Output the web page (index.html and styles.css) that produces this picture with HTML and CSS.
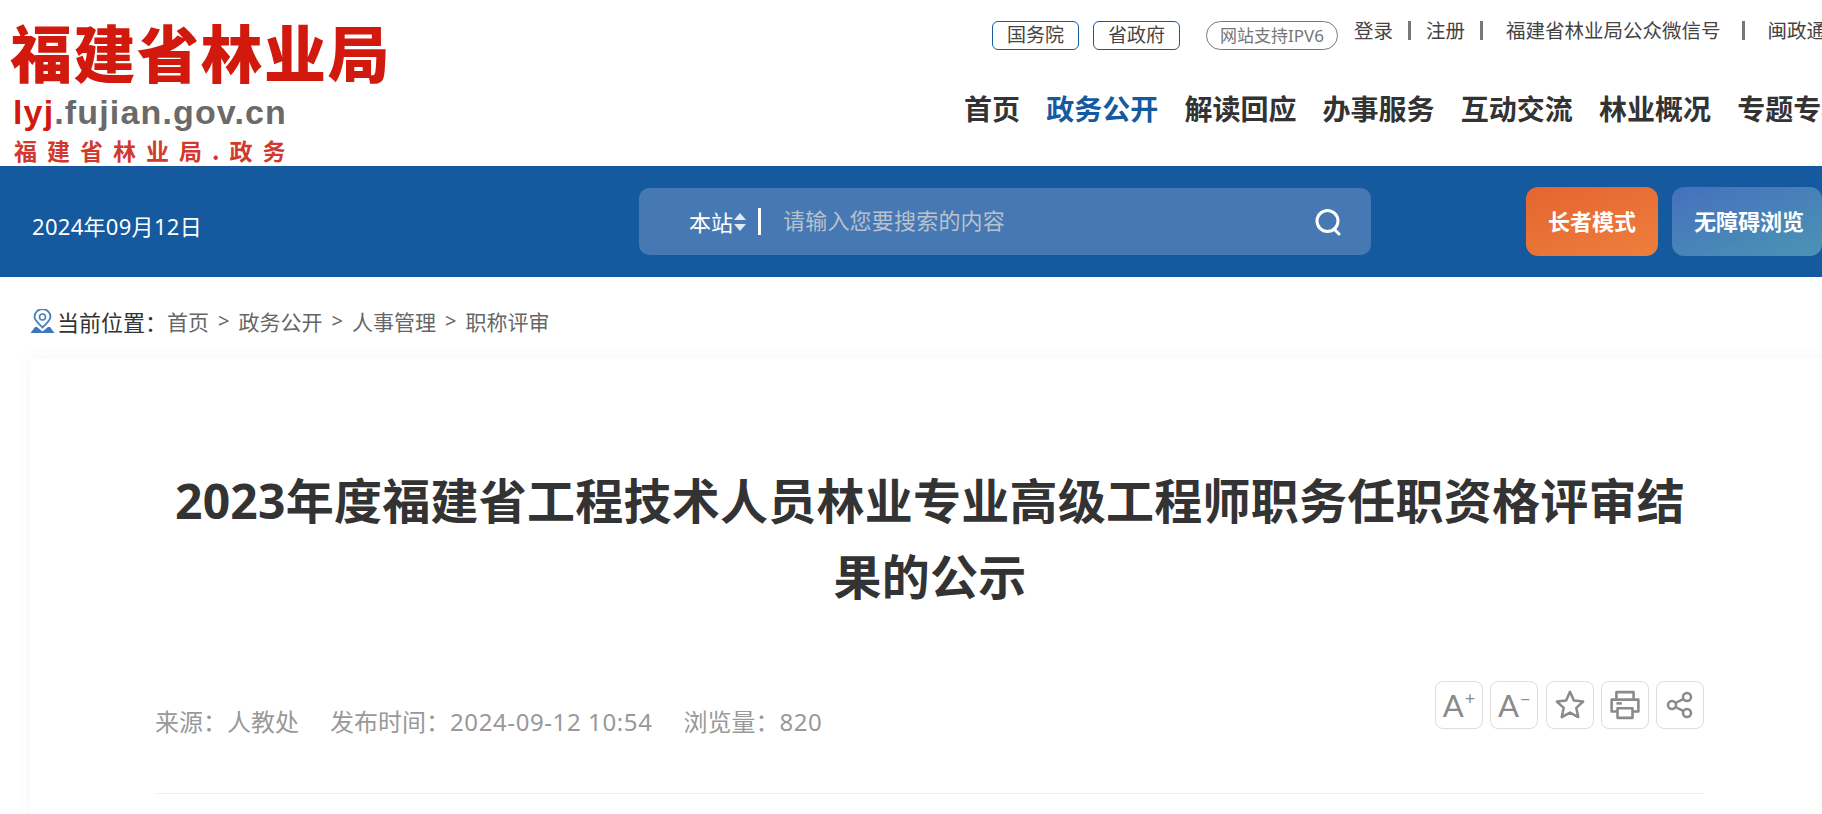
FILE: index.html
```html
<!DOCTYPE html>
<html lang="zh-CN">
<head>
    <meta charset="UTF-8">
    <meta name="viewport" content="width=device-width, initial-scale=1.0">
    <title>2023年度福建省工程技术人员林业专业高级工程师职务任职资格评审结果的公示</title>
    <link rel="stylesheet" href="styles.css">
</head>
<body>
    <header class="site-header">
        <div class="logo">
            <div class="logo-name">福建省林业局</div>
            <div class="logo-url"><span class="logo-url-red">lyj</span>.fujian.gov.cn</div>
            <div class="logo-sub">福建省林业局.政务</div>
        </div>
        <div class="header-right">
            <div class="top-links">
                <a class="pill">国务院</a>
                <a class="pill">省政府</a>
                <a class="pill pill-ipv6">网站支持IPV6</a>
                <a class="top-link top-link-first">登录</a>
                <span class="top-sep"></span>
                <a class="top-link">注册</a>
                <span class="top-sep"></span>
                <a class="top-link top-link-wide">福建省林业局公众微信号</a>
                <span class="top-sep top-sep-wide"></span>
                <a class="top-link top-link-wide">闽政通</a>
            </div>
            <nav class="main-nav">
                <a>首页</a>
                <a class="active">政务公开</a>
                <a>解读回应</a>
                <a>办事服务</a>
                <a>互动交流</a>
                <a>林业概况</a>
                <a>专题专栏</a>
            </nav>
        </div>
    </header>

    <div class="blue-bar">
        <div class="date">2024年09月12日</div>
        <div class="search">
            <span class="search-scope">本站</span>
            <svg class="scope-arrows" width="14" height="20" viewBox="0 0 14 20">
                <path d="M7 1l6 7H1z" fill="#e4eaf3"/>
                <path d="M7 19l6-7H1z" fill="#e4eaf3"/>
            </svg>
            <span class="search-sep"></span>
            <span class="search-hint">请输入您要搜索的内容</span>
            <svg class="search-icon" width="28" height="28" viewBox="0 0 28 28" fill="none" stroke="#fff" stroke-width="3">
                <circle cx="13.5" cy="13" r="10.5"/>
                <path d="M20 21l5 5" stroke-linecap="round"/>
            </svg>
        </div>
        <a class="mode-btn mode-elder">长者模式</a>
        <a class="mode-btn mode-access">无障碍浏览</a>
    </div>

    <div class="breadcrumb">
        <svg class="pin" width="25" height="24" viewBox="0 0 25 24" fill="none">
            <path d="M12.5 18.500C7.500 13.500 4.500 11 4.500 8a8 8 0 0 1 16 0C20.500 11 17.500 13.500 12.500 18.500z" stroke="#4a7fb8" stroke-width="1.800"/>
            <circle cx="12.500" cy="8" r="3" stroke="#4a7fb8" stroke-width="1.600"/>
            <path d="M5 18L.5 24h24L20 18h-2l-5.500 4.500L7 18z" fill="#3f78b5"/>
        </svg>
        <span class="crumb-label">当前位置：</span>
        <a>首页</a>
        <span class="crumb-arrow">&gt;</span>
        <a>政务公开</a>
        <span class="crumb-arrow">&gt;</span>
        <a>人事管理</a>
        <span class="crumb-arrow">&gt;</span>
        <a>职称评审</a>
    </div>

    <main class="article">
        <h1 class="article-title">2023年度福建省工程技术人员林业专业高级工程师职务任职资格评审结果的公示</h1>
        <div class="article-meta">
            <div class="meta-info">
                <span>来源：人教处</span>
                <span>发布时间：<span class="meta-num">2024-09-12 10:54</span></span>
                <span>浏览量：<span class="meta-num">820</span></span>
            </div>
            <div class="tools">
                <a class="tool tool-font">A<sup>+</sup></a>
                <a class="tool tool-font">A<sup>−</sup></a>
                <a class="tool">
                    <svg width="32" height="32" viewBox="0 0 28 28" fill="none" stroke="#8a8a8a" stroke-width="2.200" stroke-linejoin="round">
                        <path d="M14 2.500l3.400 7.600 8.100.9-6 5.500 1.700 8.100L14 20.600l-7.200 4 1.700-8.100-6-5.500 8.100-.9z"/>
                    </svg>
                </a>
                <a class="tool">
                    <svg width="30" height="30" viewBox="0 0 28 28" fill="none" stroke="#8a8a8a" stroke-width="2.400" stroke-linejoin="round">
                        <path d="M6 9V2h16v7"/>
                        <path d="M7 20H1.500V9h25v11H21"/>
                        <path d="M7 17h14v9H7z"/>
                        <path d="M6 12.500h5"/>
                    </svg>
                </a>
                <a class="tool">
                    <svg width="28" height="28" viewBox="0 0 28 28" fill="none" stroke="#8a8a8a" stroke-width="2.500">
                        <circle cx="21" cy="6" r="4"/>
                        <circle cx="6" cy="14" r="4"/>
                        <circle cx="21" cy="22" r="4"/>
                        <path d="M9.500 12l8-4.200M9.500 16l8 4.200"/>
                    </svg>
                </a>
            </div>
        </div>
    </main>
</body>
</html>
```

FILE: styles.css
```css
html, body {
    margin: 0;
    padding: 0;
    height: 814px;
    overflow: hidden;
}

body {
    font-family: "Noto Sans", "Noto Sans CJK SC", sans-serif;
    background-color: #fff;
    color: #333;
}

a {
    color: inherit;
    text-decoration: none;
}

/* header */
.site-header {
    display: flex;
    height: 166px;
    white-space: nowrap;
}

.logo {
    flex: 0 0 954px;
    padding-left: 10px;
    overflow: hidden;
}

.logo-name {
    margin-top: 16px;
    font-family: "Noto Sans CJK SC", sans-serif;
    font-size: 62px;
    line-height: 70px;
    font-weight: 900;
    letter-spacing: 1.500px;
    color: #d2190e;
}

.logo-url {
    margin: 6px 0 0 3px;
    font-family: "Liberation Sans", sans-serif;
    font-size: 34px;
    line-height: 40px;
    font-weight: 700;
    letter-spacing: 1.150px;
    color: #6a6a6a;
}

.logo-url-red {
    color: #d2190e;
}

.logo-sub {
    margin: 3px 0 0 4px;
    font-family: "Noto Sans CJK SC", sans-serif;
    font-size: 23px;
    line-height: 30px;
    font-weight: 700;
    letter-spacing: 10px;
    color: #d2392e;
}

.top-links {
    display: flex;
    align-items: flex-start;
    margin: 21px 0 0 28px;
    height: 29px;
    font-size: 19.500px;
    color: #444;
}

.pill {
    box-sizing: border-box;
    width: 87px;
    height: 29px;
    margin-right: 14px;
    border: 1px solid #15599f;
    border-radius: 6px;
    font-size: 19px;
    line-height: 27px;
    text-align: center;
}

.pill-ipv6 {
    width: 132px;
    margin: 0 0 0 12px;
    border-color: #777;
    border-radius: 15px;
    font-size: 17px;
    color: #777;
}

.top-link {
    line-height: 22px;
    margin-top: -1px;
}

.top-link-first {
    margin-left: 16px;
}

.top-link-wide {
    margin-left: 8px;
}

.top-sep {
    width: 3px;
    height: 19px;
    margin: 0 15px;
    background-color: #777;
}

.top-sep-wide {
    margin-left: 21px;
}

.main-nav {
    display: flex;
    gap: 26.200px;
    margin: 40px 0 0 0;
    font-size: 28px;
    line-height: 38px;
    font-weight: 700;
    color: #333;
}

.main-nav .active {
    color: #15599f;
}

/* blue bar */
.blue-bar {
    display: flex;
    align-items: center;
    box-sizing: border-box;
    height: 111px;
    padding-left: 32px;
    background-color: #15599f;
    color: #fff;
    white-space: nowrap;
}

.date {
    flex: 0 0 607px;
    font-size: 22px;
    letter-spacing: .3px;
    margin-top: 6px;
}

.search {
    display: flex;
    align-items: center;
    flex: 0 0 732px;
    box-sizing: border-box;
    height: 67px;
    padding: 0 29px 0 50px;
    background-color: #4679b3;
    border-radius: 10px;
    font-size: 22px;
}

.search-scope {
    margin-bottom: 2px;
}

.search-sep {
    width: 3px;
    height: 27px;
    margin: 0 22px 0 11px;
    background-color: #fff;
}

.search-hint {
    flex: 1;
    margin-bottom: 5px;
    letter-spacing: .2px;
    color: #b9c1cc;
}

.mode-btn {
    flex: 0 0 auto;
    box-sizing: border-box;
    height: 69px;
    border-radius: 12px;
    font-size: 22px;
    line-height: 69px;
    font-weight: 700;
    text-align: center;
}

.mode-elder {
    width: 132px;
    margin-left: 155px;
    background: linear-gradient(160deg, #e56431, #ed7f3c);
}

.mode-access {
    width: 150px;
    margin-left: 14px;
    padding-left: 4px;
    background: linear-gradient(160deg, #4670bd, #4a94b4);
}

/* breadcrumb */
.breadcrumb {
    display: flex;
    align-items: center;
    box-sizing: border-box;
    height: 81px;
    padding: 6px 0 0 30px;
    font-size: 21px;
    color: #666;
    white-space: nowrap;
}

.pin {
    margin: 0 2px 0 0;
}

.crumb-label {
    width: 110px;
    font-size: 22px;
    color: #333;
}

.crumb-arrow {
    width: 29.500px;
    text-align: center;
    font-size: 20px;
}

/* article card */
.article {
    box-sizing: border-box;
    width: 1800px;
    height: 456px;
    margin-left: 30px;
    padding: 105px 126px 0;
    background-color: #fff;
    box-shadow: 0 0 12px rgba(90, 120, 200, 0.08);
}

.article-title {
    margin: 0;
    font-size: 48px;
    line-height: 76px;
    font-weight: 700;
    letter-spacing: .25px;
    text-align: center;
    color: #333;
}

.article-meta {
    display: flex;
    justify-content: space-between;
    align-items: flex-start;
    height: 48px;
    margin-top: 66px;
    padding-bottom: 64px;
    border-bottom: 1px solid #eee;
}

.meta-info {
    display: flex;
    gap: 31px;
    margin: 22px 0 0 -1px;
    font-size: 24px;
    color: #999;
}

.meta-num {
    letter-spacing: .6px;
}

.tools {
    display: flex;
    gap: 7.250px;
}

.tool {
    display: flex;
    justify-content: center;
    align-items: center;
    box-sizing: border-box;
    width: 48px;
    height: 48px;
    border: 1px solid #ddd;
    border-radius: 8px;
    color: #8a8a8a;
}

.tool-font {
    font-family: "Lato", sans-serif;
    font-size: 31px;
    line-height: 34px;
    font-weight: 400;
}

.tool-font sup {
    font-size: 18px;
    line-height: 18px;
    margin: -14px 0 0 1px;
}
```
